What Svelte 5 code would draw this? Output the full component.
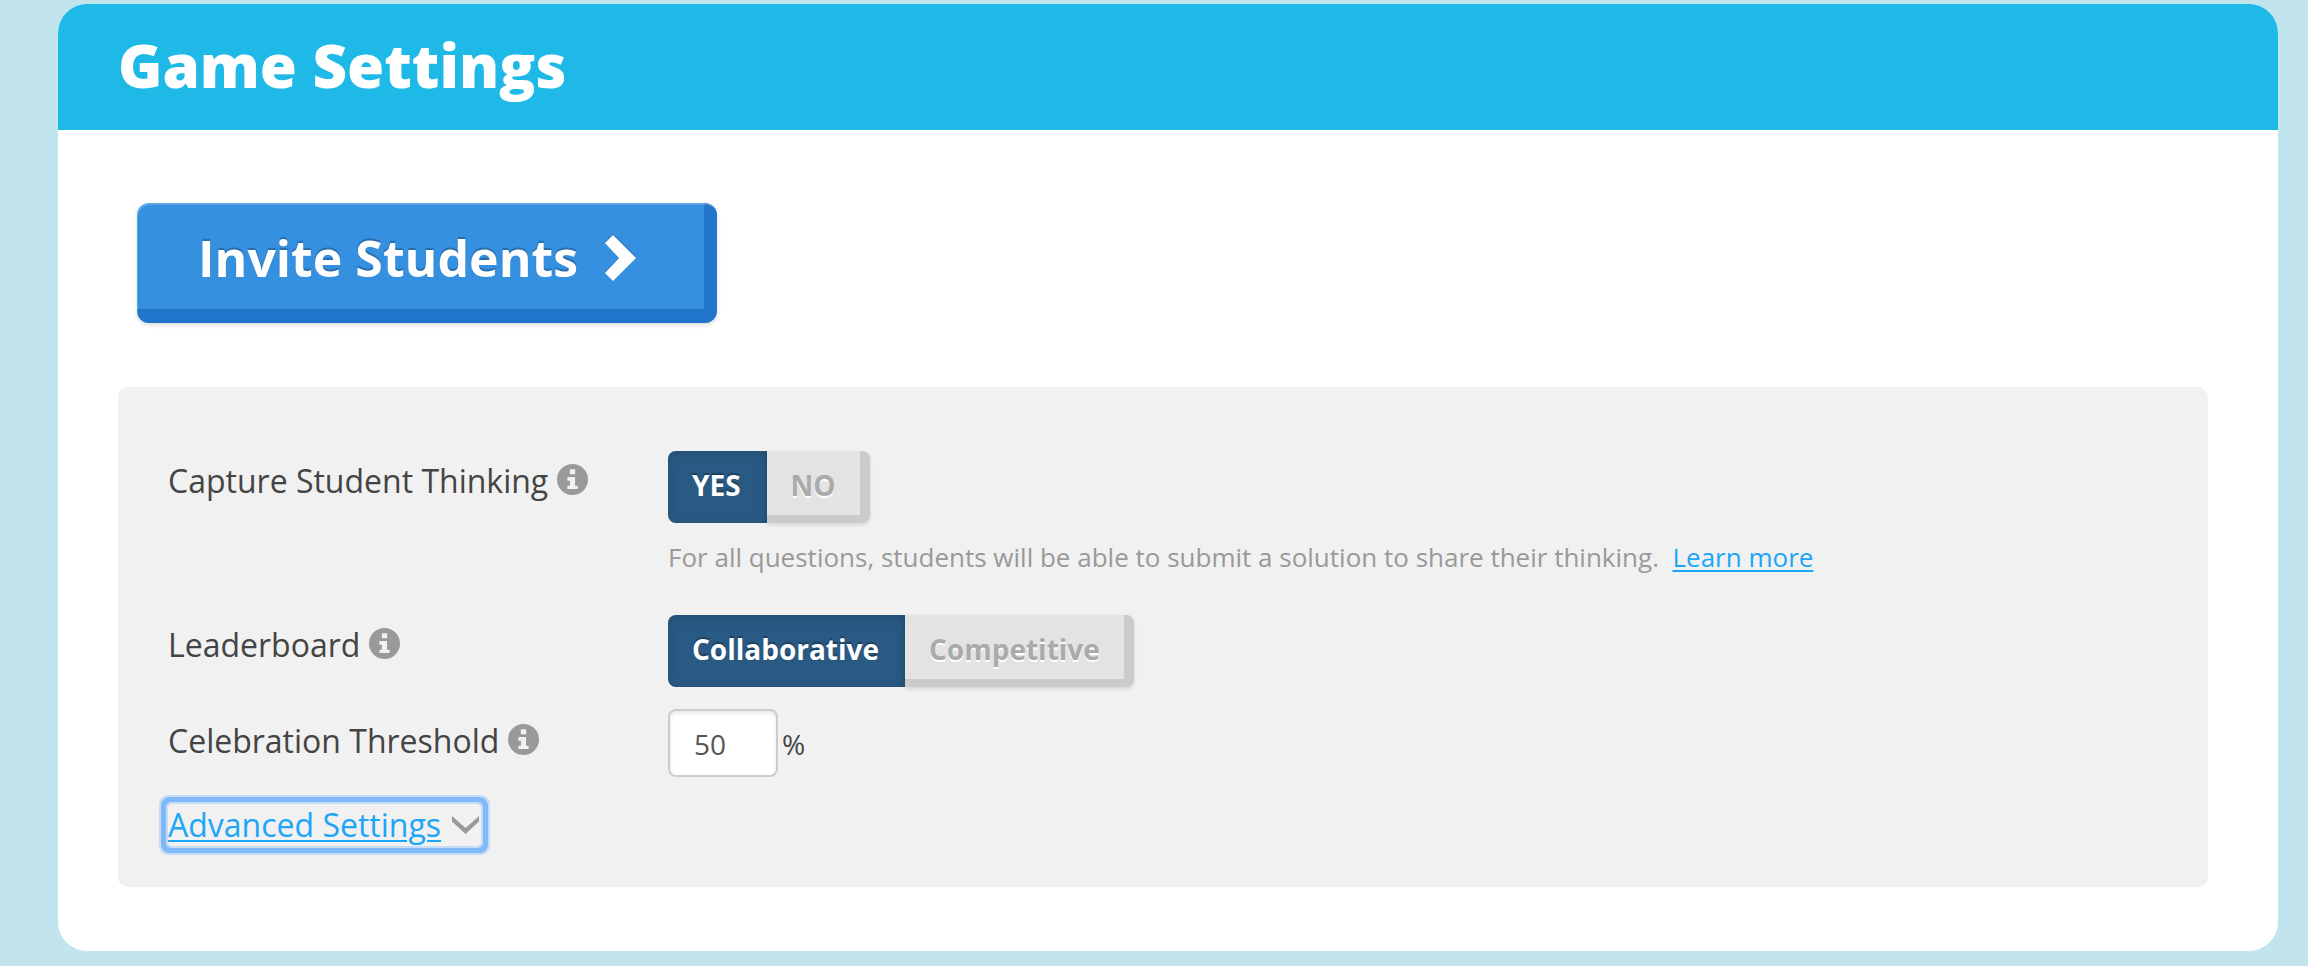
<script lang="ts">
	let captureThinking = $state(true);
	let leaderboard = $state('Collaborative');
	let threshold = $state('50');
	let advancedOpen = $state(false);

	function toggleAdvanced(e: Event) {
		e.preventDefault();
		advancedOpen = !advancedOpen;
	}
</script>

{#snippet info()}
	<svg class="info" viewBox="0 0 30 30" aria-hidden="true">
		<path
			fill-rule="evenodd"
			d="M15 0a15 15 0 1 1 0 30a15 15 0 0 1 0-30zM13 5a.6.6 0 0 0-.6.6v3.8a.6.6 0 0 0 .6.6h4a.6.6 0 0 0 .6-.6V5.600a.6.6 0 0 0-.6-.6zM10.600 12.500a.6.6 0 0 0-.6.6v2.600a.6.6 0 0 0 .6.6h1.900v4.700h-1.900a.6.6 0 0 0-.6.6v1.900a.6.6 0 0 0 .6.6h8.800a.6.6 0 0 0 .6-.6v-1.900a.6.6 0 0 0-.6-.6h-1.900v-7.900a.6.6 0 0 0-.6-.6z"
		/>
	</svg>
{/snippet}

<div class="page">
	<main class="card">
		<header class="card-header">
			<h1>Game Settings</h1>
		</header>

		<div class="card-body">
			<button class="invite" type="button">
				Invite Students
				<svg class="invite-arrow" viewBox="0 0 32 46" aria-hidden="true">
					<path d="M8 0L31 23L8 46L0 38L14 23L0 8z" />
				</svg>
			</button>

			<section class="panel">
				<div class="row">
					<div class="label" id="capture-label">Capture Student Thinking {@render info()}</div>
					<div>
						<div class="toggle" role="group" aria-labelledby="capture-label">
							<button type="button" aria-pressed={captureThinking} onclick={() => (captureThinking = true)}>YES</button>
							<button type="button" aria-pressed={!captureThinking} onclick={() => (captureThinking = false)}>NO</button>
						</div>
						<p class="help">
							For all questions, students will be able to submit a solution to share their thinking.&nbsp;
							<a href="#learn-more">Learn more</a>
						</p>
					</div>
				</div>

				<div class="row row-leaderboard">
					<div class="label" id="leaderboard-label">Leaderboard {@render info()}</div>
					<div class="toggle" role="group" aria-labelledby="leaderboard-label">
						{#each ['Collaborative', 'Competitive'] as mode}
							<button type="button" aria-pressed={leaderboard === mode} onclick={() => (leaderboard = mode)}>{mode}</button>
						{/each}
					</div>
				</div>

				<div class="row row-threshold">
					<label class="label" for="threshold">Celebration Threshold {@render info()}</label>
					<div class="percent">
						<input id="threshold" type="text" inputmode="numeric" bind:value={threshold} />
						<span>%</span>
					</div>
				</div>

				<a class="advanced" href="#advanced" aria-expanded={advancedOpen} onclick={toggleAdvanced}>
					<span>Advanced Settings</span>
					<svg class="chevron" class:open={advancedOpen} viewBox="0 0 27 18" aria-hidden="true">
						<path d="M0 0L13.500 12L27 0V5.500L13.500 18L0 5.500z" />
					</svg>
				</a>
			</section>
		</div>
	</main>
</div>

<style>
	:global(body) {
		margin: 0;
		background: #c2e4ec;
	}

	.page {
		padding: 4px 30px 14px 58px;
		font-family: 'Open Sans', sans-serif;
		color: #444;
	}

	.card {
		display: block;
		overflow: hidden;
		border-radius: 29px;
		background: #fff;
	}

	.card-header {
		padding: 20px 60px 24px;
		background: #1fb9e7;
	}

	h1 {
		margin: 0;
		font-size: 60px;
		line-height: 82px;
		font-weight: 800;
		color: #fff;
	}

	.card-body {
		padding: 73px 70px 64px 60px;
	}

	button {
		border: 0;
		font-family: inherit;
		font-weight: 700;
		cursor: pointer;
	}

	.invite {
		display: flex;
		align-items: center;
		gap: 27px;
		height: 120px;
		margin-left: 19px;
		padding: 0 80px 10px 61px;
		border-radius: 12px;
		background: linear-gradient(#3590e0, #3590e0) 0 0 / calc(100% - 13px) calc(100% - 14px) no-repeat #2175cb;
		box-shadow:
			inset 1px 2px 0 rgba(255, 255, 255, 0.2),
			0 2px 4px rgba(0, 0, 0, 0.15);
		font-size: 50px;
		color: #fff;
		text-shadow: 0 -2px 1px rgba(0, 0, 0, 0.25);
	}

	.invite-arrow {
		width: 32px;
		height: 46px;
		fill: #fff;
		filter: drop-shadow(0 -1px 0 rgba(0, 0, 0, 0.2));
	}

	.panel {
		margin-top: 64px;
		padding: 64px 50px 41px;
		border-radius: 10px;
		background: #f1f1f1;
	}

	.row {
		display: grid;
		grid-template-columns: 500px 1fr;
		align-items: start;
	}

	.row-leaderboard {
		margin-top: 40px;
	}

	.row-threshold {
		margin-top: 22px;
	}

	.label {
		font-size: 32px;
		line-height: 60px;
	}

	.row-threshold .label {
		line-height: 64px;
	}

	.info {
		width: 31px;
		height: 31px;
		vertical-align: -2px;
		fill: #999;
	}

	.toggle {
		display: flex;
	}

	.toggle button {
		height: 72px;
		padding: 0 34px 4px 24px;
		background: linear-gradient(#e3e3e3, #e3e3e3) 0 0 / calc(100% - 10px) calc(100% - 8px) no-repeat #cbcbcb;
		box-shadow: 0 2px 4px rgba(0, 0, 0, 0.12);
		font-size: 28px;
		color: #aaa;
		text-shadow: 0 2px 0 #fff;
	}

	.toggle button:first-child {
		padding-right: 26px;
		border-radius: 8px 0 0 8px;
	}

	.toggle button:last-child {
		border-radius: 0 8px 8px 0;
	}

	.toggle button[aria-pressed='true'] {
		background: #295a84;
		box-shadow: inset 0 2px 12px rgba(0, 0, 0, 0.15);
		color: #fff;
		text-shadow: 0 -2px 1px rgba(0, 0, 0, 0.3);
	}

	.help {
		margin: 16px 0 0;
		font-size: 26px;
		line-height: 36px;
		color: #999;
	}

	a {
		color: #1da5f7;
		text-underline-offset: 3px;
		text-decoration-thickness: 2px;
	}

	.percent {
		display: flex;
		align-items: center;
		gap: 4px;
		font-size: 28px;
	}

	input {
		box-sizing: border-box;
		width: 110px;
		height: 68px;
		padding: 2px 24px 0;
		border: 2px solid #ccc;
		border-radius: 8px;
		background: #fff;
		box-shadow: inset 0 2px 4px rgba(0, 0, 0, 0.1);
		font: inherit;
		color: #555;
	}

	.percent span {
		padding-top: 2px;
	}

	.advanced {
		display: flex;
		align-items: center;
		gap: 11px;
		width: fit-content;
		margin-top: 27px;
		padding-right: 2px;
		border-radius: 3px;
		box-shadow:
			0 0 0 2px #c5dbf6,
			0 0 0 7px #80b9f7,
			0 0 0 9px #c5dbf6;
		font-size: 32px;
		line-height: 42px;
		text-decoration: none;
		outline: none;
	}

	.advanced span {
		text-decoration: underline 2px;
		text-underline-offset: 3px;
	}

	.chevron {
		width: 27px;
		height: 18px;
		fill: #999;
	}

	.chevron.open {
		transform: rotate(180deg);
	}
</style>
